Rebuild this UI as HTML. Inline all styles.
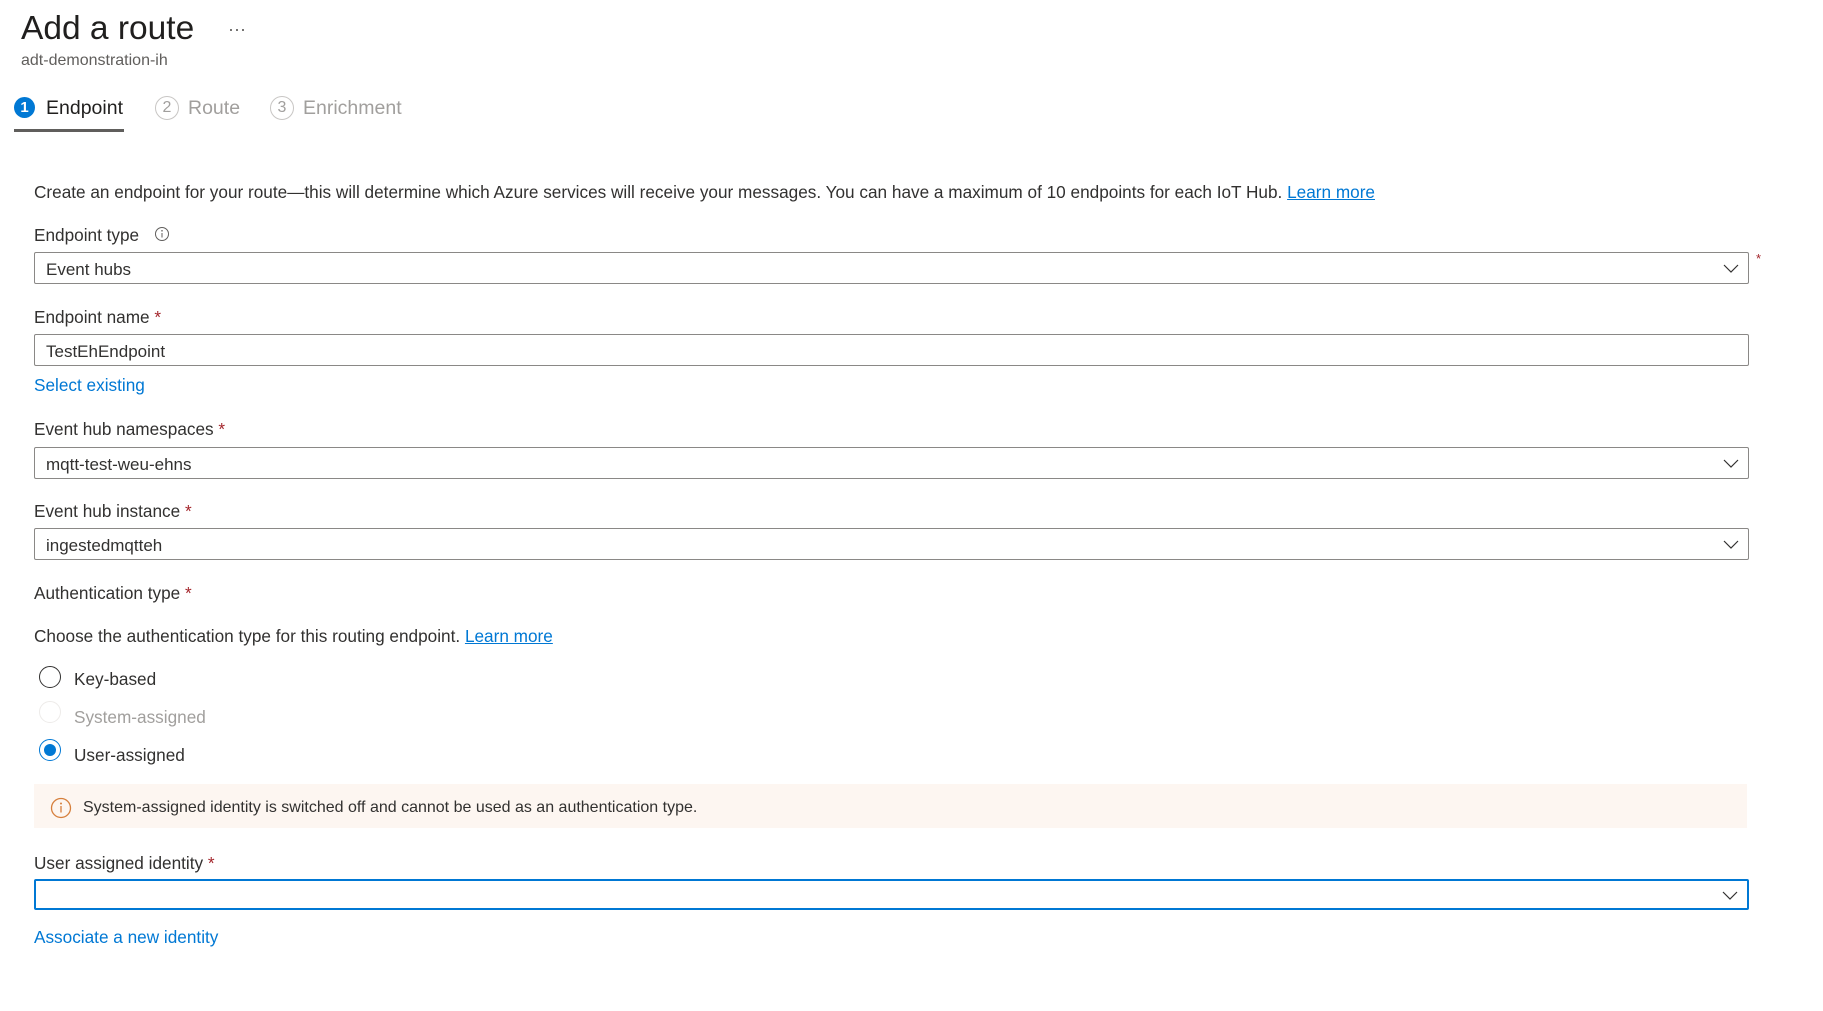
<!DOCTYPE html>
<html><head><meta charset="utf-8"><style>
body{margin:0;width:1823px;height:1011px;background:#fff;font-family:"Liberation Sans",sans-serif;color:#323130;position:relative;overflow:hidden}
.a{position:absolute;white-space:nowrap;line-height:1}
.lbl{font-size:17.2px}
.req{color:#a4262c}
.box{position:absolute;left:34px;width:1713px;height:30px;border:1px solid #8a8886;border-radius:2px;box-sizing:content-box}
.box span{position:absolute;left:11px;top:7px;font-size:17px}
.chev{position:absolute;right:9px;top:9px}
.link{color:#0078d4}
.radio{position:absolute;left:39px;width:20px;height:20px;border:1.5px solid #323130;border-radius:50%}
</style></head><body>
<div class="a" style="left:21px;top:12px;font-size:33.5px;color:#201f1e">Add a route</div>
<div class="a" style="left:228px;top:20px;font-size:18px;color:#605e5c">···</div>
<div class="a" style="left:21px;top:53px;font-size:16px;color:#605e5c">adt-demonstration-ih</div>

<div class="a" style="left:14px;top:97px;width:21px;height:21px;border-radius:50%;background:#0078d4;color:#fff;font-size:15px;font-weight:bold;text-align:center;line-height:21px">1</div>
<div class="a" style="left:46px;top:99px;font-size:19.5px;color:#201f1e">Endpoint</div>
<div class="a" style="left:14px;top:129px;width:110px;height:3px;background:#605e5c"></div>
<div class="a" style="left:155px;top:96px;width:22px;height:22px;border-radius:50%;border:1px solid #c8c6c4;color:#a19f9d;font-size:16px;text-align:center;line-height:22px">2</div>
<div class="a" style="left:188px;top:99px;font-size:19.5px;color:#a19f9d">Route</div>
<div class="a" style="left:270px;top:96px;width:22px;height:22px;border-radius:50%;border:1px solid #c8c6c4;color:#a19f9d;font-size:16px;text-align:center;line-height:22px">3</div>
<div class="a" style="left:303px;top:99px;font-size:19.5px;color:#a19f9d">Enrichment</div>

<div class="a lbl" style="left:34px;top:184px">Create an endpoint for your route—this will determine which Azure services will receive your messages. You can have a maximum of 10 endpoints for each IoT Hub. <span class="link" style="text-decoration:underline">Learn more</span></div>

<div class="a lbl" style="left:34px;top:227px">Endpoint type</div>
<svg class="a" style="left:154px;top:226px" width="16" height="16" viewBox="0 0 16 16"><circle cx="8" cy="8" r="6.5" fill="none" stroke="#605e5c"/><line x1="8" y1="7" x2="8" y2="11.5" stroke="#605e5c"/><circle cx="8" cy="4.8" r=".8" fill="#605e5c"/></svg>
<div class="box" style="top:252px"><span>Event hubs</span><svg class="chev" width="16" height="12" viewBox="0 0 16 12"><path d="M1 3l7 7 7-7" fill="none" stroke="#323130" stroke-width="1.2"/></svg></div>
<div class="a req" style="left:1756px;top:252px;font-size:13px">*</div>

<div class="a lbl" style="left:34px;top:309px">Endpoint name <span class="req">*</span></div>
<div class="box" style="top:334px"><span>TestEhEndpoint</span></div>
<div class="a lbl link" style="left:34px;top:377px">Select existing</div>

<div class="a lbl" style="left:34px;top:421px">Event hub namespaces <span class="req">*</span></div>
<div class="box" style="top:447px"><span>mqtt-test-weu-ehns</span><svg class="chev" width="16" height="12" viewBox="0 0 16 12"><path d="M1 3l7 7 7-7" fill="none" stroke="#323130" stroke-width="1.2"/></svg></div>

<div class="a lbl" style="left:34px;top:503px">Event hub instance <span class="req">*</span></div>
<div class="box" style="top:528px"><span>ingestedmqtteh</span><svg class="chev" width="16" height="12" viewBox="0 0 16 12"><path d="M1 3l7 7 7-7" fill="none" stroke="#323130" stroke-width="1.2"/></svg></div>

<div class="a lbl" style="left:34px;top:585px">Authentication type <span class="req">*</span></div>
<div class="a lbl" style="left:34px;top:628px">Choose the authentication type for this routing endpoint. <span class="link" style="text-decoration:underline">Learn more</span></div>

<div class="radio" style="top:666px"></div>
<div class="a lbl" style="left:74px;top:671px">Key-based</div>
<div class="radio" style="top:701px;border-color:#edebe9"></div>
<div class="a lbl" style="left:74px;top:709px;color:#a19f9d">System-assigned</div>
<div class="radio" style="top:739px;border-color:#0078d4"><div style="position:absolute;left:4px;top:4px;width:12px;height:12px;border-radius:50%;background:#0078d4"></div></div>
<div class="a lbl" style="left:74px;top:747px">User-assigned</div>

<div class="a" style="left:34px;top:784px;width:1713px;height:44px;background:#fdf6f1"></div>
<svg class="a" style="left:50px;top:797px" width="22" height="22" viewBox="0 0 22 22"><circle cx="11" cy="11" r="9.5" fill="none" stroke="#d67f3c" stroke-width="1.3"/><line x1="11" y1="9" x2="11" y2="15.5" stroke="#d67f3c" stroke-width="1.3"/><circle cx="11" cy="6.5" r="1" fill="#d67f3c"/></svg>
<div class="a" style="left:83px;top:800px;font-size:16px">System-assigned identity is switched off and cannot be used as an authentication type.</div>

<div class="a lbl" style="left:34px;top:855px">User assigned identity <span class="req">*</span></div>
<div class="box" style="top:879px;width:1711px;height:27px;border:2px solid #0078d4"><svg class="chev" width="16" height="12" viewBox="0 0 16 12" style="top:8px"><path d="M1 3l7 7 7-7" fill="none" stroke="#323130" stroke-width="1.2"/></svg></div>
<div class="a lbl link" style="left:34px;top:929px">Associate a new identity</div>
</body></html>
